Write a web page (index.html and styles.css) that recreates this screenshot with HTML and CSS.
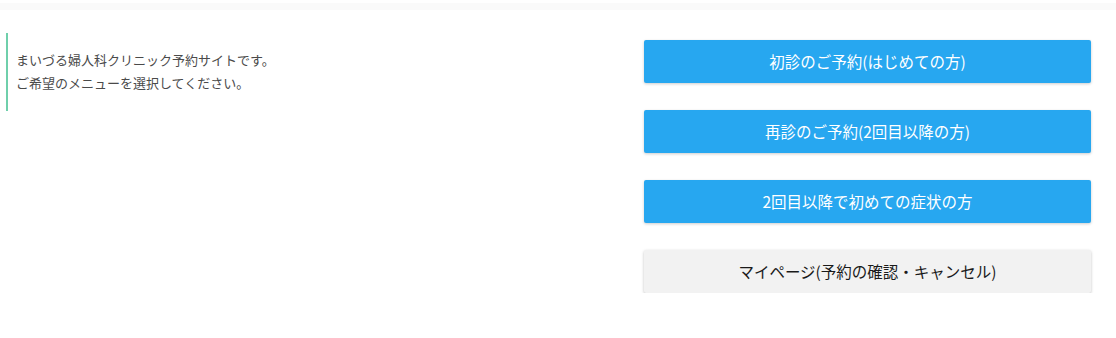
FILE: index.html
```html
<!DOCTYPE html>
<html lang="ja">
<head>
    <meta charset="UTF-8">
    <meta name="viewport" content="width=device-width, initial-scale=1.0">
    <title>まいづる婦人科クリニック 予約</title>
    <link rel="stylesheet" href="styles.css">
</head>
<body>
    <div class="topbar"></div>
    <div class="container">
        <div class="intro">
            <p>まいづる婦人科クリニック予約サイトです。</p>
            <p>ご希望のメニューを選択してください。</p>
        </div>
        <div class="menu">
            <a href="#" class="btn btn-blue">初診のご予約(はじめての方)</a>
            <a href="#" class="btn btn-blue">再診のご予約(2回目以降の方)</a>
            <a href="#" class="btn btn-blue">2回目以降で初めての症状の方</a>
            <a href="#" class="btn btn-gray">マイページ(予約の確認・キャンセル)</a>
        </div>
    </div>
</body>
</html>
```
FILE: styles.css
```css
*{
    margin: 0px;
    padding: 0px;
    box-sizing: border-box;
    font-family: "Noto Sans CJK JP", "Noto Sans", sans-serif;
}
body{
    background-color: white;
    color: #444;
}
.topbar{
    margin-top: 3px;
    height: 7px;
    background-color: #fafafa;
}
.container{
    display: flex;
    justify-content: space-between;
}
.intro{
    margin-top: 23px;
    margin-left: 6px;
    height: 78px;
    border-left: 2px solid #6fcfab;
    padding: 15px 0 0 8px;
    font-size: 13px;
    line-height: 23px;
    color: #4a4a4a;
}
.menu{
    display: flex;
    flex-direction: column;
    gap: 27px;
    width: 447px;
    margin-top: 30px;
    margin-right: 25px;
}
.btn{
    display: flex;
    align-items: center;
    justify-content: center;
    height: 43px;
    padding-bottom: 2px;
    border-radius: 2px;
    font-size: 15.5px;
    text-decoration: none;
    box-shadow: 0 1px 3px rgba(0, 0, 0, 0.2);
}
.btn-blue{
    background-color: #27a7f0;
    color: white;
}
.btn-gray{
    background-color: #f2f2f2;
    color: #1a1a1a;
    box-shadow: 0 1px 3px rgba(0, 0, 0, 0.25);
}
```
